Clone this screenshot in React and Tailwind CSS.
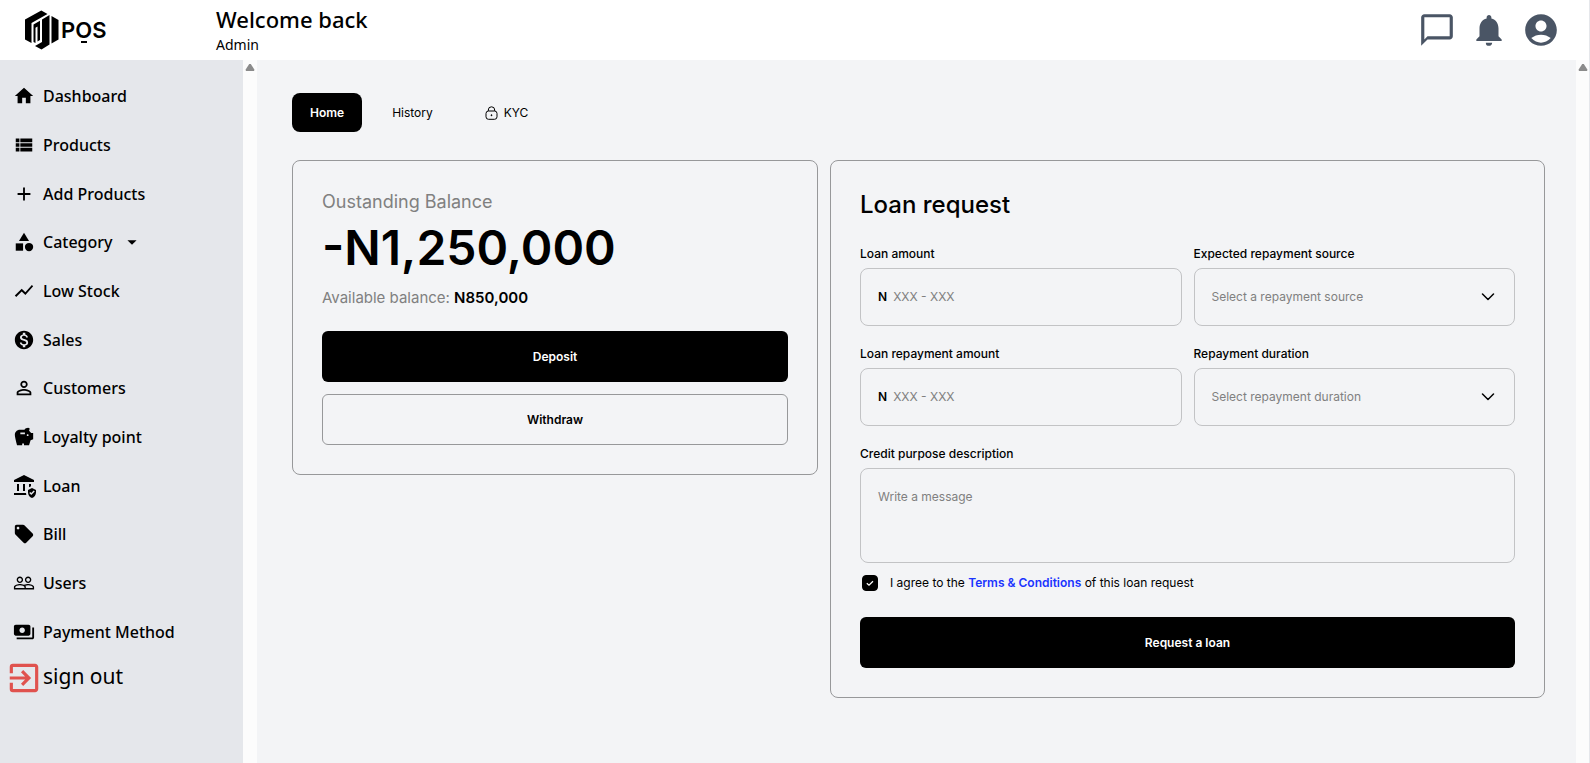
import React, { useState } from 'react';
import {
  MdAccountCircle,
  MdAdd,
  MdArrowDropDown,
  MdAssuredWorkload,
  MdCategory,
  MdChatBubbleOutline,
  MdExitToApp,
  MdHome,
  MdLocalOffer,
  MdMonetizationOn,
  MdNotifications,
  MdPayments,
  MdPeopleOutline,
  MdPersonOutline,
  MdSavings,
  MdShowChart,
  MdViewList,
} from 'react-icons/md';

const menu = [
  { label: 'Dashboard', icon: MdHome },
  { label: 'Products', icon: MdViewList },
  { label: 'Add Products', icon: MdAdd },
  { label: 'Category', icon: MdCategory, dropdown: true },
  { label: 'Low Stock', icon: MdShowChart },
  { label: 'Sales', icon: MdMonetizationOn },
  { label: 'Customers', icon: MdPersonOutline },
  { label: 'Loyalty point', icon: MdSavings },
  { label: 'Loan', icon: MdAssuredWorkload, size: 24 },
  { label: 'Bill', icon: MdLocalOffer },
  { label: 'Users', icon: MdPeopleOutline },
  { label: 'Payment Method', icon: MdPayments },
];

function Logo() {
  return (
    <a href="#" aria-label="POS" className="flex items-center">
      <svg width="37" height="40" viewBox="0 0 37 40" aria-hidden="true">
        <path d="M1 9.500L17.300 0.500L23.500 4L7.500 13V33L1 29.500Z" />
        <path d="M9.500 14.500L16 10.800V30L13.500 31.500V16.500L11.500 17.700V33L9.500 32Z" />
        <path d="M18 9.500L25.500 5V34.500L17.500 39.500L11 36L18 32Z" />
        <path d="M27.500 6L34.500 10V29.500L27.500 33.500Z" />
      </svg>
      <span className="text-[22px] font-semibold">
        P
        <span className="relative">
          O
          <span className="absolute bottom-0 left-1/2 h-[2px] w-1.5 -translate-x-1/2 bg-black" />
        </span>
        S
      </span>
    </a>
  );
}

function Header() {
  return (
    <header className="flex h-15 shrink-0 items-center border-r border-gray-200 bg-white pr-[29px] pl-6">
      <div className="w-48 shrink-0">
        <Logo />
      </div>
      <div className="flex flex-1 flex-col gap-0.5 font-['Noto_Sans',sans-serif]">
        <h1 className="text-[22px] leading-7 font-medium">Welcome back</h1>
        <p className="text-sm leading-5">Admin</p>
      </div>
      <div className="flex items-center gap-3.5 text-gray-600">
        <button type="button" aria-label="Messages"><MdChatBubbleOutline size={38} /></button>
        <button type="button" aria-label="Notifications"><MdNotifications size={38} /></button>
        <button type="button" aria-label="Account"><MdAccountCircle size={38} /></button>
      </div>
    </header>
  );
}

function Sidebar() {
  return (
    <aside className="w-[243px] shrink-0 bg-gray-200 pt-3 font-['Noto_Sans',sans-serif]">
      <nav className="flex h-[584px] flex-col">
        {menu.map(({ label, icon: Icon, size = 22, dropdown }) => (
          <a key={label} href="#" className="flex flex-1 items-center text-base font-medium">
            <span className="flex w-[43px] justify-center pl-1">
              <Icon size={size} />
            </span>
            {label}
            {dropdown && <MdArrowDropDown size={22} className="ml-2" />}
          </a>
        ))}
      </nav>
      <button type="button" className="mt-[3px] flex items-start text-[21px] leading-[34px]">
        <span className="flex w-[43px] justify-center pl-1 text-[#e0524e]">
          <MdExitToApp size={38} />
        </span>
        sign out
      </button>
    </aside>
  );
}

// Empty scroll track with the up arrow on top
function ScrollTrack({ className = '' }) {
  return (
    <div className={`flex w-3.5 shrink-0 justify-center bg-[#fcfcfc] pt-1 ${className}`}>
      <svg width="10" height="8" viewBox="0 0 10 8" fill="#8b8b8b" aria-hidden="true">
        <path d="M4.200 0h1.600L9.500 5.800L9 7H1L0.500 5.800z" />
      </svg>
    </div>
  );
}

function Tabs() {
  return (
    <div className="flex gap-3 text-xs">
      <button type="button" className="h-[39px] rounded-lg bg-black px-[18px] font-semibold text-white">Home</button>
      <button type="button" className="h-[39px] px-[18px]">History</button>
      <button type="button" className="flex h-[39px] items-center gap-1.5 px-[22px]">
        <svg width="13" height="14" viewBox="0 0 13 14" fill="none" stroke="currentColor" aria-hidden="true">
          <rect x="1" y="5" width="11" height="8.300" rx="2.500" />
          <path d="M3.300 5V4a3.200 3.200 0 0 1 6.400 0v1" />
          <circle cx="6.500" cy="9.200" r="0.500" fill="currentColor" />
        </svg>
        KYC
      </button>
    </div>
  );
}

function BalanceCard() {
  return (
    <section className="rounded-lg border border-[#97989a] p-[29px]">
      <p className="text-lg leading-6 text-[#808080]">Oustanding Balance</p>
      <p className="mt-1 text-5xl leading-[60px] font-semibold">-N1,250,000</p>
      <p className="mt-2 text-[15px] leading-6 text-[#808080]">
        Available balance: <span className="font-semibold text-black">N850,000</span>
      </p>
      <button type="button" className="mt-[21px] h-[51px] w-full rounded-md bg-black text-xs font-semibold text-white">Deposit</button>
      <button type="button" className="mt-3 h-[51px] w-full rounded-md border border-[#97989a] text-xs font-semibold">Withdraw</button>
    </section>
  );
}

function Chevron() {
  return (
    <svg width="14" height="8" viewBox="0 0 14 8" fill="none" stroke="black" strokeWidth="1.500" strokeLinecap="round" strokeLinejoin="round" className="pointer-events-none absolute top-1/2 right-5 -translate-y-1/2" aria-hidden="true">
      <path d="M1.500 1L7 6.500L12.500 1" />
    </svg>
  );
}

function AmountField({ id, label }) {
  return (
    <div className="flex flex-col gap-1">
      <label htmlFor={id} className="leading-5 font-medium">{label}</label>
      <div className="flex h-[58px] items-center gap-1.5 rounded-lg border border-[#c2c3c5] px-[17px]">
        <span className="font-semibold">N</span>
        <input id={id} type="text" placeholder="XXX - XXX" className="min-w-0 flex-1 outline-none placeholder:text-[#808080]" />
      </div>
    </div>
  );
}

function SelectField({ id, label, placeholder }) {
  return (
    <div className="flex flex-col gap-1">
      <label htmlFor={id} className="leading-5 font-medium">{label}</label>
      <div className="relative">
        <select id={id} className="h-[58px] w-full appearance-none rounded-lg border border-[#c2c3c5] px-[17px] text-[#808080]">
          <option>{placeholder}</option>
        </select>
        <Chevron />
      </div>
    </div>
  );
}

function LoanForm() {
  const [agreed, setAgreed] = useState(true);

  return (
    <form className="rounded-lg border border-[#97989a] p-[29px] text-xs" onSubmit={(e) => e.preventDefault()}>
      <h2 className="text-2xl leading-[30px] font-medium">Loan request</h2>
      <div className="mt-6 grid grid-cols-2 gap-x-3 gap-y-[18px]">
        <AmountField id="amount" label="Loan amount" />
        <SelectField id="source" label="Expected repayment source" placeholder="Select a repayment source" />
        <AmountField id="repayment" label="Loan repayment amount" />
        <SelectField id="duration" label="Repayment duration" placeholder="Select repayment duration" />
        <div className="col-span-2 flex flex-col gap-1">
          <label htmlFor="purpose" className="leading-5 font-medium">Credit purpose description</label>
          <textarea id="purpose" placeholder="Write a message" className="h-[95px] resize-none rounded-lg border border-[#c2c3c5] px-[17px] py-5 outline-none placeholder:text-[#808080]" />
        </div>
      </div>
      <div className="mt-2.5 flex items-center gap-3 pl-0.5">
        <span className="relative flex">
          <input id="agree" type="checkbox" checked={agreed} onChange={(e) => setAgreed(e.target.checked)} className="size-4 appearance-none rounded border border-black checked:bg-black" />
          <svg width="16" height="16" viewBox="0 0 16 16" fill="none" stroke="white" strokeWidth="1.300" className="pointer-events-none absolute inset-0" aria-hidden="true">
            <path d="M4.800 8.200L7 10.200L11 6.200" />
          </svg>
        </span>
        <label htmlFor="agree" className="leading-5">
          I agree to the <a href="#" className="font-semibold text-[#1a33ff]">Terms &amp; Conditions</a> of this loan request
        </label>
      </div>
      <button type="submit" className="mt-6 h-[51px] w-full rounded-md bg-black font-semibold text-white">Request a loan</button>
    </form>
  );
}

export default function App() {
  return (
    <div className="flex h-screen flex-col overflow-hidden bg-gray-100 font-['Inter',sans-serif] text-black">
      <Header />
      <div className="flex min-h-0 flex-1">
        <Sidebar />
        <ScrollTrack />
        <main className="min-w-0 flex-1 pt-[33px] pr-[31px] pl-[35px]">
          <Tabs />
          <div className="mt-7 grid grid-cols-[526fr_715fr] items-start gap-3">
            <BalanceCard />
            <LoanForm />
          </div>
        </main>
        <ScrollTrack className="border-r border-gray-200" />
      </div>
    </div>
  );
}
